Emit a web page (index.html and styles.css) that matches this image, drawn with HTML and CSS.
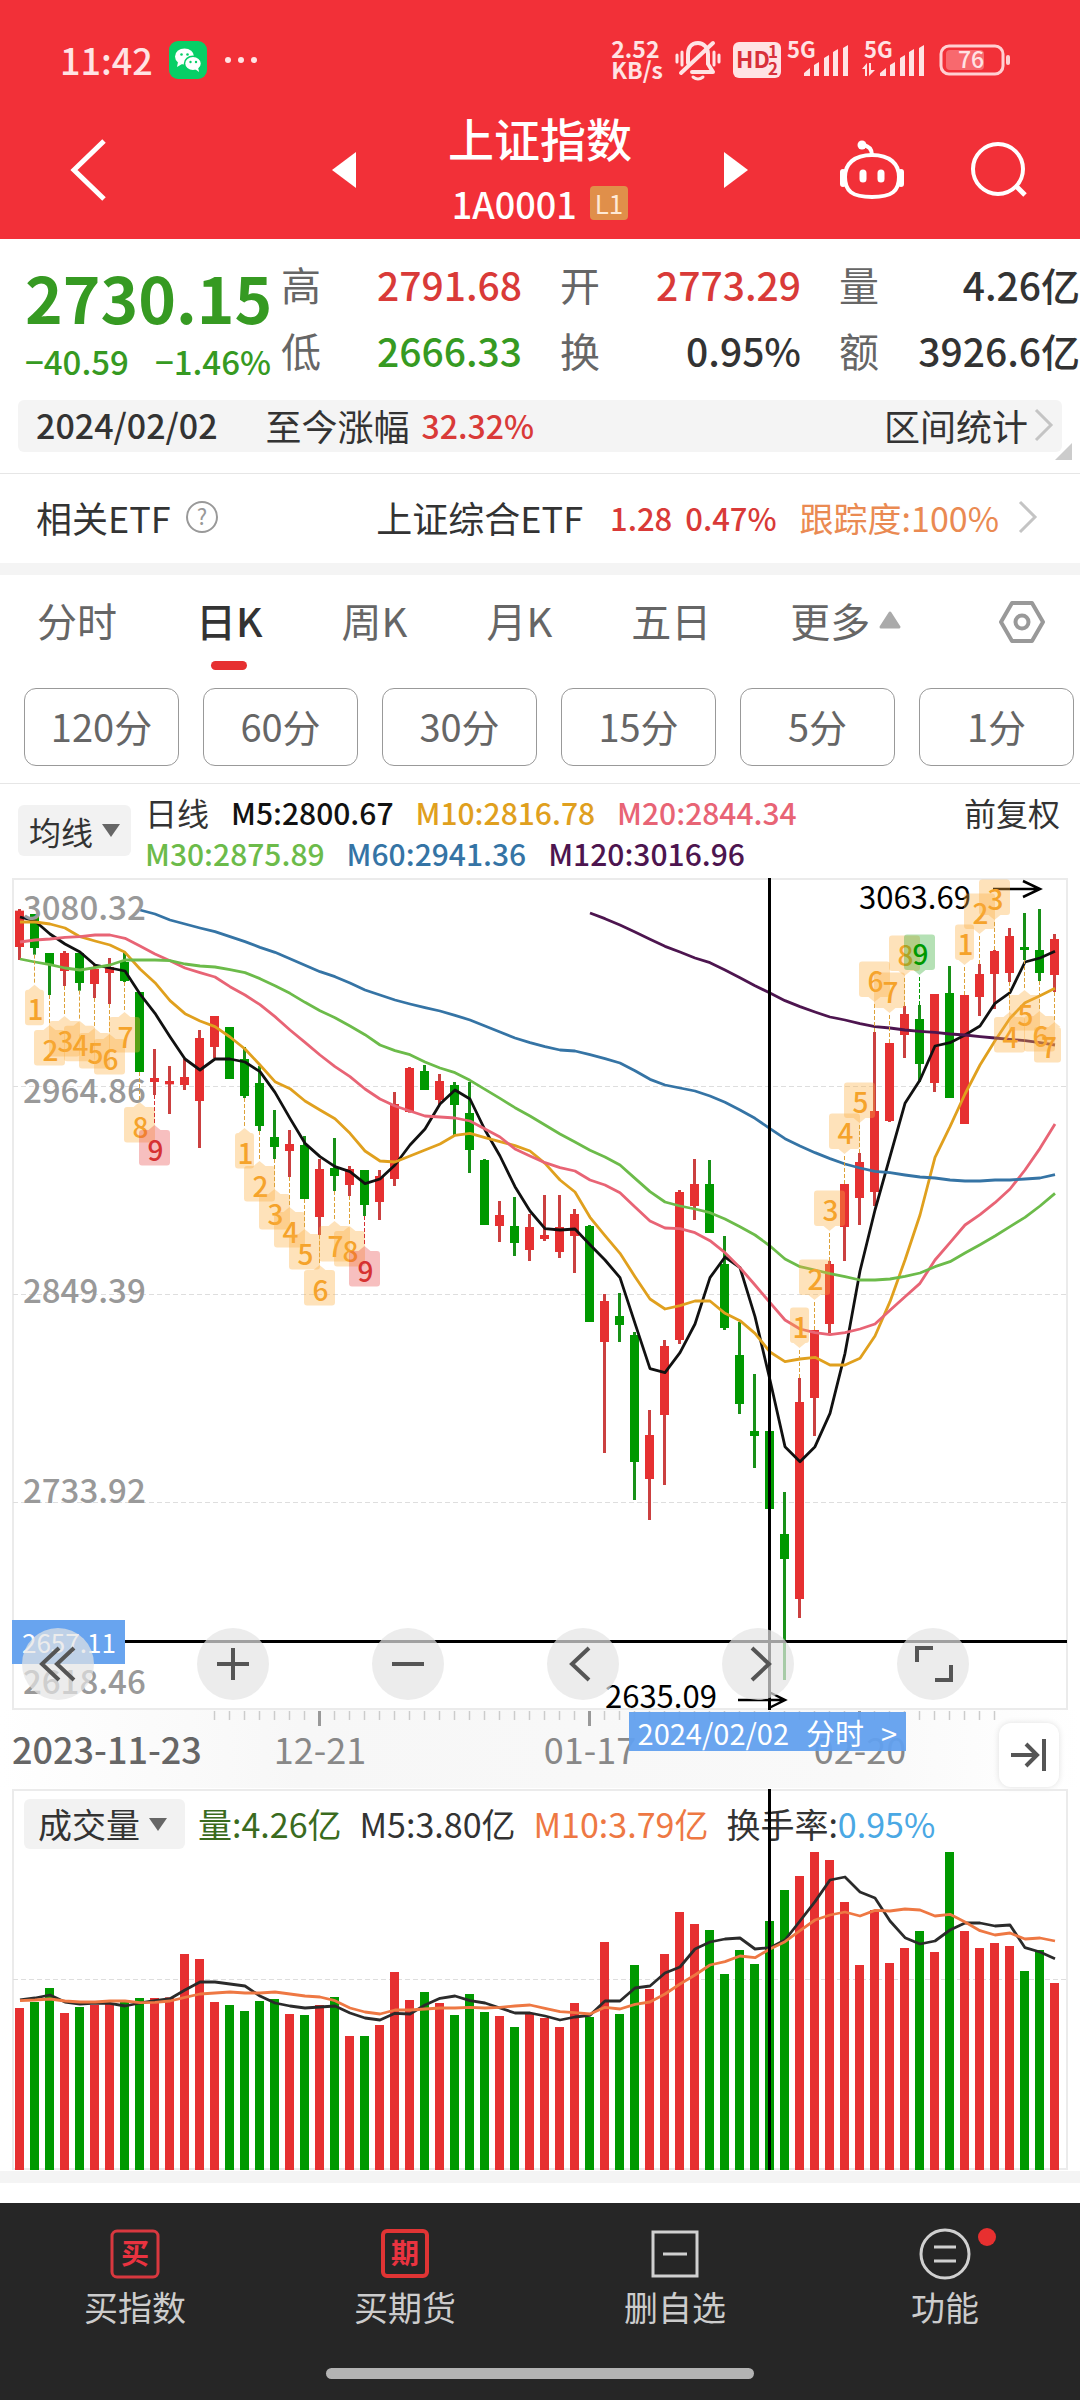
FILE: index.html
```html
<!DOCTYPE html>
<html lang="zh-CN">
<head>
<meta charset="utf-8">
<meta name="viewport" content="width=device-width, initial-scale=1">
<title>上证指数 1A0001</title>
<link rel="stylesheet" href="styles.css">
</head>
<body>
<header class="top">
  <div class="status">
    <span class="clock">11:42</span>
    <svg class="wechat" viewBox="0 0 38 38" width="38" height="38"><rect width="38" height="38" rx="9" fill="#07cf66"/><ellipse cx="15.500" cy="15.500" rx="9.500" ry="8" fill="#fff"/><path d="M9 21l-1 5 5-3z" fill="#fff"/><ellipse cx="24" cy="22.500" rx="8.500" ry="7.200" fill="#fff" stroke="#07cf66" stroke-width="1.500"/><path d="M26 28l4 3-1-5z" fill="#fff"/><g fill="#07cf66"><circle cx="12.500" cy="13.500" r="1.300"/><circle cx="18.500" cy="13.500" r="1.300"/><circle cx="21.500" cy="21" r="1.200"/><circle cx="27" cy="21" r="1.200"/></g></svg>
    <svg viewBox="0 0 34 8" width="34" height="8" fill="#ffe3e4"><circle cx="4" cy="4" r="3"/><circle cx="17" cy="4" r="3"/><circle cx="30" cy="4" r="3"/></svg>
    <div class="status-right">
      <span class="speed">2.52<br>KB/s</span>
      <svg viewBox="0 0 46 40" width="46" height="40" fill="none" stroke="#ffe3e4" stroke-width="3" stroke-linecap="round"><path d="M17 32h21l-5-8V14c0-6-4-11-10-11-7 0-10 5-10 11v9M38 3L6 33" stroke-linejoin="round" stroke-width="4"/><path d="M18 37q5 4 10 0M2 15v7M7 12v13M44 15v7M39 12v13"/></svg>
      <svg class="hd-badge" viewBox="0 0 48 36" width="48" height="36"><rect width="48" height="36" rx="6" fill="#ffe3e4"/><text class="hd" x="3" y="26">HD</text><text class="hd-num" x="35" y="16">1</text><text class="hd-num" x="35" y="33">2</text></svg>
      <svg viewBox="0 0 64 38" width="64" height="38" fill="#ffe3e4"><text class="net" x="0" y="17">5G</text><path d="M17 35v-3l6-5v8zM27 24l5-3v14h-5zM37 17l5-3v21h-5zM46 11l5-3v27h-5zM56 7l5-3v31h-5z"/></svg>
      <svg viewBox="0 0 64 38" width="64" height="38" fill="#ffe3e4"><text class="net" x="1" y="17">5G</text><path d="M-1 28l5-6v13H2v-7zM6 22h2v7h4l-6 6zM17 35v-3l6-5v8zM27 24l5-3v14h-5zM37 17l5-3v21h-5zM46 11l5-3v27h-5zM56 7l5-3v31h-5z"/></svg>
      <svg viewBox="0 0 72 32" width="72" height="32"><rect x="2" y="2" width="62" height="28" rx="8" fill="none" stroke="#ffd0d2" stroke-width="3"/><rect x="7" y="6" width="38" height="20" rx="4" fill="#f8696e"/><rect x="67" y="11" width="4" height="10" rx="2" fill="#ffd0d2"/><text class="charge" x="32" y="24">76</text></svg>
    </div>
  </div>
  <nav class="nav">
    <button class="plain back" aria-label="返回"><svg viewBox="0 0 40 64" width="40" height="64" fill="none" stroke="#fff" stroke-width="5"><path d="M36 3L6 32l30 29"/></svg></button>
    <div class="switcher">
      <button class="plain" aria-label="上一个"><svg viewBox="0 0 24 38" width="24" height="38" fill="#fff"><path d="M24 1v36L0 19z"/></svg></button>
      <div class="title">
        <h1>上证指数</h1>
        <p>1A0001<span class="level">L1</span></p>
      </div>
      <button class="plain" aria-label="下一个"><svg viewBox="0 0 24 38" width="24" height="38" fill="#fff"><path d="M0 1v36l24-18z"/></svg></button>
    </div>
    <div class="nav-right">
      <button class="plain" aria-label="智能助手"><svg viewBox="0 0 66 60" width="66" height="60" fill="none" stroke="#fff" stroke-width="4"><path d="M33 15c18 0 27 9 27 22 0 14-7 20-27 20S6 51 6 37c0-13 9-22 27-22z"/><path d="M33 15c0-6-3-9-9-10"/><path d="M4 32v12M62 32v12" stroke-width="6" stroke-linecap="round"/><circle cx="23" cy="5" r="4.500" fill="#fff" stroke="none"/><path d="M24 33v6M42 33v6" stroke-width="7" stroke-linecap="round"/></svg></button>
      <button class="plain" aria-label="搜索"><svg viewBox="0 0 60 60" width="60" height="60" fill="none" stroke="#fff" stroke-width="4"><circle cx="29" cy="29" r="25"/><path d="M47 46l9 9" stroke-width="5"/></svg></button>
    </div>
  </nav>
</header>

<main>
  <section class="quote">
    <div class="last">
      <div class="price">2730.15</div>
      <div class="change"><span>−40.59</span><span>−1.46%</span></div>
    </div>
    <dl class="stats">
      <div><dt>高</dt><dd class="up">2791.68</dd></div>
      <div><dt>开</dt><dd class="up">2773.29</dd></div>
      <div><dt>量</dt><dd>4.26亿</dd></div>
      <div><dt>低</dt><dd class="down">2666.33</dd></div>
      <div><dt>换</dt><dd>0.95%</dd></div>
      <div><dt>额</dt><dd>3926.6亿</dd></div>
    </dl>
  </section>

  <section class="range">
    <span class="day">2024/02/02</span>
    <span>至今涨幅</span>
    <span class="up gain">32.32%</span>
    <a href="#stats" class="range-link">区间统计<svg viewBox="0 0 20 34" width="20" height="34" fill="none" stroke="#c4c4c4" stroke-width="3"><path d="M2 2l15 15L2 32"/></svg></a>
    <svg class="fold" viewBox="0 0 17 17" width="17" height="17"><path d="M17 0v17H0z" fill="#ccc"/></svg>
  </section>

  <a href="#etf" class="etf">
    <span>相关ETF</span>
    <svg class="help" viewBox="0 0 34 34" width="34" height="34"><circle cx="17" cy="17" r="15" fill="none" stroke="#999" stroke-width="2"/><text x="17" y="25">?</text></svg>
    <span class="etf-name">上证综合ETF</span>
    <span class="up etf-num">1.28</span>
    <span class="up etf-num">0.47%</span>
    <span class="track">跟踪度:100%</span>
    <svg viewBox="0 0 20 34" width="20" height="34" fill="none" stroke="#c4c4c4" stroke-width="3"><path d="M2 2l15 15L2 32"/></svg>
  </a>
  <div class="band"></div>

  <div class="tabs">
    <button class="plain tab">分时</button>
    <button class="plain tab current">日K</button>
    <button class="plain tab">周K</button>
    <button class="plain tab">月K</button>
    <button class="plain tab">五日</button>
    <button class="plain tab more">更多<svg viewBox="0 0 22 18" width="22" height="18"><path d="M11 2l9 14H2z" fill="#aaa" stroke="#aaa" stroke-width="3" stroke-linejoin="round"/></svg></button>
    <button class="plain setting" aria-label="设置"><svg viewBox="0 0 48 44" width="48" height="44" fill="none" stroke="#999" stroke-width="4"><path d="M14 3h20l11 19-11 19H14L3 22z" stroke-linejoin="round"/><circle cx="24" cy="22" r="6.500"/></svg></button>
  </div>
  <div class="periods">
    <button>120分</button><button>60分</button><button>30分</button><button>15分</button><button>5分</button><button>1分</button>
  </div>

  <section class="averages">
    <button class="picker">均线<svg viewBox="0 0 18 13" width="18" height="13"><path d="M0 0h18l-9 13z" fill="#666"/></svg></button>
    <div class="avg-list">
      <div><span class="ink day-line">日线</span><span class="m5">M5:2800.67</span><span class="m10">M10:2816.78</span><span class="m20">M20:2844.34</span></div>
      <div><span class="m30">M30:2875.89</span><span class="m60">M60:2941.36</span><span class="m120">M120:3016.96</span></div>
    </div>
    <button class="plain adjust">前复权</button>
  </section>

  <section class="kline">
    <svg id="kline" viewBox="0 8 1080 832" role="img" aria-label="日K线图"></svg>
    <div class="tools">
      <button aria-label="收起"><svg viewBox="0 0 72 72"><path d="M37 20L20 36l17 16M52 20L35 36l17 16"/></svg></button>
      <button aria-label="放大"><svg viewBox="0 0 72 72"><path d="M36 20v32M20 36h32"/></svg></button>
      <button aria-label="缩小"><svg viewBox="0 0 72 72"><path d="M20 36h32"/></svg></button>
      <button aria-label="左移"><svg viewBox="0 0 72 72"><path d="M42 20L25 36l17 16"/></svg></button>
      <button aria-label="右移"><svg viewBox="0 0 72 72"><path d="M30 20l17 16-17 16"/></svg></button>
      <button aria-label="全屏"><svg viewBox="0 0 72 72"><path d="M20 34V20h16M38 52h16V37"/></svg></button>
    </div>
  </section>

  <section class="axis">
    <svg id="axis" viewBox="0 0 1080 78" role="img" aria-label="日期轴"></svg>
    <button class="cursor-date">2024/02/02<span>分时</span><span>&gt;</span></button>
    <button class="latest" aria-label="最新"><svg viewBox="0 0 40 36" width="40" height="36" fill="none" stroke="#555" stroke-width="4"><path d="M2 18h25M17 7l11 11-11 11M35 2v32"/></svg></button>
  </section>

  <section class="volume">
    <div class="vol-head">
      <button class="picker">成交量<svg viewBox="0 0 18 13" width="18" height="13"><path d="M0 0h18l-9 13z" fill="#666"/></svg></button>
      <span class="vol">量:4.26亿</span>
      <span class="ink">M5:3.80亿</span>
      <span class="vol10">M10:3.79亿</span>
      <span class="ink">换手率:<span class="turn">0.95%</span></span>
    </div>
    <svg id="volume" viewBox="0 8 1080 383" role="img" aria-label="成交量图"></svg>
  </section>
  <div class="band"></div>
</main>

<footer class="bottom">
  <div class="actions">
    <button class="plain"><svg viewBox="0 0 52 52" width="52" height="52"><rect x="3" y="3" width="46" height="46" rx="5" fill="none" stroke="#d8383f" stroke-width="3"/><text class="seal" x="26" y="36">买</text></svg>买指数</button>
    <button class="plain"><svg viewBox="0 0 52 52" width="52" height="52"><rect x="4" y="3" width="44" height="45" rx="4" fill="none" stroke="#e03434" stroke-width="4"/><text class="seal" x="26" y="36">期</text></svg>买期货</button>
    <button class="plain"><svg viewBox="0 0 52 52" width="52" height="52" fill="none" stroke="#d0d0d0" stroke-width="3"><path d="M4 4h44v44H4z"/><path d="M14 26h24"/></svg>删自选</button>
    <button class="plain"><svg viewBox="0 0 52 52" width="52" height="52" fill="none" stroke="#d0d0d0" stroke-width="3"><circle cx="26" cy="26" r="24"/><path d="M15 19h22M15 33h22"/></svg>功能<i class="dot"></i></button>
  </div>
  <div class="home"></div>
</footer>
<script src="chart.js"></script>
</body>
</html>
```
FILE: styles.css
```css
* { box-sizing: border-box; }
body {
  margin: 0;
  background: #fff;
  color: #333;
  font-family: "Noto Sans CJK SC", "Noto Sans", sans-serif;
  font-size: 36px;
  overflow-x: hidden;
}
button { font: inherit; color: inherit; cursor: pointer; padding: 0; }
.plain { border: 0; background: none; }
a { color: inherit; text-decoration: none; }
svg { display: block; flex: none; }
h1, p, dl, dd { margin: 0; }
.up { color: #d93a38; }
.down { color: #369a22; }
.ink { color: #333; }

/* header */
.top { background: #f23038; color: #fff; height: 239px; }
.status { display: flex; align-items: center; height: 100px; padding: 20px 69px 0 60px; color: #ffe3e4; }
.status svg { overflow: visible; }
.clock { font-size: 36px; line-height: 40px; padding-bottom: 3px; font-weight: 500; }
.wechat { margin: 0 17px 0 16px; }
.status-right { margin-left: auto; display: flex; align-items: center; gap: 12px; }
.speed { font-size: 23px; line-height: 21px; padding-bottom: 2px; font-weight: 700; }
.hd-badge { margin-right: -6px; }
.hd { font-size: 23px; font-weight: 700; fill: #d8303a; }
.hd-num { font-size: 17px; font-weight: 700; fill: #d8303a; }
.net { font-size: 22px; font-weight: 700; }
.charge { font-size: 23px; font-weight: 500; fill: #ffe3e4; text-anchor: middle; }
.nav { display: grid; grid-template-columns: 1fr 416px 1fr; align-items: center; height: 139px; }
.back { justify-self: start; margin-left: 68px; }
.switcher { display: flex; align-items: center; justify-content: space-between; }
.title { text-align: center; }
.title h1 { font-size: 46px; line-height: 66px; font-weight: 500; }
.title p { display: flex; align-items: center; justify-content: center; gap: 13px; font-size: 36px; line-height: 66px; font-weight: 500; }
.level { background: #e08f4a; border-radius: 4px; font-size: 26px; line-height: 34px; padding: 0 5px; color: #ffe9d5; font-weight: 400; }
.nav-right { display: flex; align-items: center; justify-content: flex-end; gap: 64px; padding-right: 51px; }

/* quote */
.quote { display: flex; height: 161px; }
.last { width: 281px; padding: 24px 0 0 25px; color: #369a22; font-weight: 500; }
.price { font-size: 64px; line-height: 66px; font-weight: 700; }
.change { display: flex; gap: 26px; font-size: 33px; line-height: 64px; }
.stats { flex: 1; display: grid; grid-template-columns: repeat(3, 1fr); column-gap: 38px; padding-top: 12px; grid-auto-rows: 66px; font-size: 40px; line-height: 66px; }
.stats div { display: flex; justify-content: space-between; }
.stats dt { color: #666; }
.stats dd { font-size: 39px; font-weight: 500; white-space: nowrap; }

.range { position: relative; display: flex; align-items: center; height: 52px; margin: 0 18px 21px; padding: 0 8px 3px 18px; background: #f4f4f4; border-radius: 6px; line-height: 48px; }
.day { font-size: 34px; font-weight: 500; margin-right: 48px; }
.gain { font-size: 32px; margin-left: 12px; font-weight: 500; }
.range-link { margin-left: auto; display: flex; align-items: center; gap: 6px; }
.fold { position: absolute; right: -10px; bottom: -8px; }

.etf { display: flex; align-items: center; height: 90px; padding: 0 42px 3px 36px; border-top: 1px solid #e6e6e6; }
.help { margin-left: 14px; }
.help text { font-size: 22px; fill: #999; text-anchor: middle; }
.etf-name { margin-left: auto; margin-right: 27px; }
.etf-num { font-size: 31px; margin-right: 13px; font-weight: 500; }
.track { font-size: 34px; color: #ea8a52; margin: 0 19px 0 10px; }
.band { height: 12px; background: #f4f4f4; }

/* period tabs */
.tabs { display: flex; align-items: flex-start; height: 113px; padding: 15px 34px 0 37px; gap: 79px; font-size: 40px; line-height: 60px; color: #666; }
.tab { position: relative; }
.current { color: #333; font-weight: 500; }
.current::after { content: ""; position: absolute; left: 50%; bottom: -20px; width: 36px; height: 9px; margin-left: -18px; border-radius: 5px; background: #e63031; }
.more { display: flex; align-items: center; gap: 9px; }
.setting { margin: 10px 0 0 auto; }
.periods { display: grid; grid-template-columns: repeat(6, 1fr); gap: 24px; padding: 0 6px 17px 24px; border-bottom: 1px solid #e6e6e6; }
.periods button { height: 78px; padding-bottom: 3px; border: 1px solid #999; border-radius: 12px; background: #fff; color: #666; font-size: 38px; }

/* moving averages */
.averages { display: flex; align-items: flex-start; height: 94px; padding: 8px 20px 0 18px; font-size: 30px; }
.picker { display: flex; align-items: center; justify-content: center; gap: 9px; height: 51px; border: 0; border-radius: 6px; background: #f2f2f2; }
.averages .picker { width: 113px; margin-top: 13px; font-size: 32px; }
.avg-list { margin-left: 14px; line-height: 41px; font-weight: 500; }
.avg-list div { display: flex; gap: 22px; }
.day-line { font-size: 32px; font-weight: 400; }
.m5 { color: #111; }
.m10 { color: #e0a01e; }
.m20 { color: #e86475; }
.m30 { color: #6cbb4a; }
.m60 { color: #3574a5; }
.m120 { color: #4d154f; }
.adjust { margin-left: auto; font-size: 32px; line-height: 41px; }

/* charts */
.kline { position: relative; }
.kline > svg, .axis > svg, .volume > svg { width: 100%; height: auto; }
.tools { position: absolute; left: 22px; right: 111px; bottom: 10px; display: flex; justify-content: space-between; }
.tools button { width: 72px; height: 72px; border: 0; border-radius: 50%; background: rgba(228, 228, 228, .7); }
.tools svg { width: 72px; height: 72px; fill: none; stroke: #555; stroke-width: 4; }
.axis { position: relative; background: linear-gradient(to right, #fff 0, #f7f7f7 28%, #f9f9f9 80%, #fff 100%); }
.cursor-date { position: absolute; left: 58.2%; top: 2px; height: 39px; padding: 0 9px 0 9px; display: flex; align-items: center; gap: 17px; border: 0; background: rgba(98, 160, 238, .95); color: #fff; font-size: 29px; white-space: nowrap; }
.latest { position: absolute; right: 21px; top: 13px; width: 60px; height: 64px; display: flex; align-items: center; justify-content: center; border: 0; border-radius: 12px; background: #fff; box-shadow: 0 0 6px rgba(0, 0, 0, .12); }
.volume { display: grid; }
.vol-head, .volume > svg { grid-area: 1 / 1; }
.volume > svg { z-index: 1; pointer-events: none; }
.vol-head { display: flex; align-items: center; align-self: start; gap: 18px; padding: 11px 24px; font-size: 34px; line-height: 50px; white-space: nowrap; }
.vol-head .picker { width: 161px; height: 50px; margin-right: -5px; padding-right: 4px; }
.vol { color: #3a6b1e; }
.vol10 { color: #ee7843; }
.turn { color: #4aa8e4; }

.scale { font-size: 33px; font-weight: 500; fill: #999; }
.peak { font-size: 31px; fill: #000; }
.cursor-price { font-size: 26px; fill: #fff; }
.tag { font-size: 28px; font-weight: 500; text-anchor: middle; }
.date { font-size: 36px; fill: #888; text-anchor: middle; }
.date-start { font-size: 36px; font-weight: 500; fill: #666; }

/* bottom bar */
.bottom { margin-top: 20px; height: 197px; background: #262626; color: #ccc; }
.actions { display: grid; grid-template-columns: repeat(4, 1fr); padding-top: 25px; height: 165px; }
.actions button { position: relative; display: flex; flex-direction: column; align-items: center; justify-content: flex-start; gap: 2px; font-size: 34px; line-height: 50px; }
.seal { font-size: 28px; font-weight: 700; fill: #ea3340; text-anchor: middle; }
.dot { position: absolute; left: calc(50% + 33px); top: 0; width: 18px; height: 18px; border-radius: 50%; background: #e83030; }
.home { width: 428px; height: 11px; margin: 0 auto; border-radius: 6px; background: #b3b3b3; }
```
FILE: chart.js
```js
const NS = 'http://www.w3.org/2000/svg';
const UP = '#e63031', DOWN = '#009900';
// Levels are stored in thirds of a chart unit.
const lv = v => v / 3;
const cx = i => 19.5 + 15 * i;

function add(parent, name, attrs, text) {
  const el = document.createElementNS(NS, name);
  for (const k in attrs) el.setAttribute(k, attrs[k]);
  if (text !== undefined) el.textContent = text;
  parent.appendChild(el);
  return el;
}
const line = (p, x1, y1, x2, y2, stroke, w, dash) =>
  add(p, 'path', { d: `M${x1} ${y1}L${x2} ${y2}`, stroke, 'stroke-width': w, fill: 'none', 'stroke-dasharray': dash || 'none' });
const curve = (p, data, start, stroke) =>
  add(p, 'polyline', { points: data.map((v, k) => `${cx(start + k) + 0.5},${lv(v)}`).join(' '), fill: 'none', stroke, 'stroke-width': 2.8, 'stroke-linejoin': 'round' });

// direction, high, body top, body bottom, low
const candles = `R 117 122 231 270|G 132 132 234 254|G 249 249 285 375|R 243 249 303 348|G 249 249 339 362|R 285 297 342 384|R 264 291 309 402|G 249 276 333 336|G 366 366 606 606|R 537 624 636 675|R 588 633 643 732|R 567 621 645 660|R 480 504 693 834|R 438 438 531 564|G 471 471 627 627|G 531 567 678 684|G 588 639 768 783|G 720 801 831 867|R 780 822 843 921|G 798 825 987 987|R 867 897 1041 1095|G 804 894 918 963|R 888 897 945 978|G 900 900 1005 1038|R 900 918 996 1050|R 666 702 927 948|R 591 594 726 728|G 585 603 660 660|R 612 633 690 705|G 636 645 705 798|G 636 729 840 909|G 867 870 1065 1065|R 993 1035 1068 1116|G 981 1068 1119 1158|R 1032 1071 1140 1173|R 975 1095 1107 1113|R 975 1071 1146 1164|R 1017 1032 1098 1209|G 1065 1068 1356 1356|R 1272 1293 1416 1749|G 1269 1338 1365 1416|G 1386 1395 1776 1890|R 1620 1695 1827 1950|R 1410 1428 1635 1845|R 960 966 1410 1422|R 867 942 1008 1050|G 870 942 1089 1089|G 1098 1182 1374 1380|G 1356 1455 1602 1632|G 1512 1683 1698 1794|G 1683 1683 1917 1917|G 1866 1992 2067 2430|R 1524 1596 2187 2244|R 1380 1380 1584 1698|R 1173 1182 1362 1389|R 942 942 1071 1173|R 849 876 984 1065|R 486 723 966 1008|R 519 519 753 756|R 408 432 495 564|G 405 447 582 636|R 372 372 639 666|G 288 369 684 684|R 375 375 762 762|R 282 312 381 438|R 240 243 312 417|R 174 198 309 336|G 129 231 240 270|G 117 240 309 333|R 192 207 315 366`
  .split('|').map(s => s.split(' ')).map(([d, ...n]) => [d, ...n.map(Number)]);

const m5 = [141,153,192,222,246,285,294,303,372,430,500,567,600,567,567,576,605,667,745,820,860,890,905,941,927,885,825,777,702,660,687,780,858,950,1023,1076,1080,1077,1124,1170,1223,1360,1496,1508,1448,1362,1223,1161,1193,1340,1530,1730,1775,1730,1630,1450,1203,1020,860,700,630,528,518,495,468,400,368,276,264,244];
const m10 = [156,156,162,174,200,213,225,247,297,338,392,431,453,470,501,537,585,635,656,693,720,746,790,843,873,876,858,840,822,796,790,803,815,827,843,880,930,966,1042,1097,1150,1220,1287,1317,1307,1293,1293,1330,1352,1390,1446,1475,1467,1462,1485,1485,1465,1398,1295,1170,1035,862,770,672,585,512,445,398,377,355];
const m20 = [216,210,207,202,200,195,195,205,228,252,272,294,308,321,350,375,404,440,480,517,555,590,620,657,687,708,723,738,741,744,753,777,801,837,858,878,893,903,930,945,968,1011,1053,1074,1076,1088,1112,1148,1193,1245,1298,1350,1377,1388,1394,1388,1377,1362,1321,1280,1240,1170,1118,1065,1034,998,957,900,835,762];
const m30 = [267,276,284,294,300,293,285,270,270,270,272,282,288,291,299,308,326,347,370,397,422,443,468,494,525,542,554,576,594,608,631,658,685,713,738,765,792,816,841,861,885,925,965,996,1008,1017,1028,1047,1070,1095,1128,1167,1190,1200,1211,1220,1230,1230,1227,1219,1209,1190,1175,1149,1124,1098,1070,1042,1008,970];
const m60 = [120,132,150,162,174,185,200,215,232,247,266,286,305,320,339,360,375,390,402,413,423,436,450,468,486,504,518,530,540,543,554,566,579,602,628,645,654,663,678,697,720,745,776,806,828,848,866,882,894,904,908,915,921,924,930,933,933,930,930,927,924,914];
const m120 = [129,146,165,186,208,229,246,264,278,300,323,347,369,392,410,426,441,450,461,470,474,480,484,487,492,495,500,504,508,512,518,525];

// Sequence counts: first candle of the run, first digit, length, side
const runs = [[1, 1, 9, 'below'], [15, 1, 9, 'below'], [52, 1, 9, 'above'], [63, 1, 3, 'above'], [66, 4, 4, 'below']];

function drawTag(svg, i, digit, side) {
  const below = side === 'below', s = below ? 1 : -1;
  const [, high, , , low] = candles[i];
  const from = lv(below ? low : high), tip = from + s * 30, x = cx(i);
  const nine = digit === 9;
  const ink = !nine ? '#f5a32b' : below ? '#d63232' : '#009900';
  const fill = !nine ? 'rgba(251,176,64,.36)' : below ? 'rgba(232,60,60,.33)' : 'rgba(30,165,30,.33)';
  line(svg, x, from, x, tip, nine ? ink : '#dda23a', 1, '4 2');
  const half = digit === 1 ? 9.5 : 15.5;
  const l = x - half, r = Math.min(x + half, 1061), mid = (l + r) / 2, c = r < x + half ? mid - 2 : x;
  const left = r < x + half ? l - 5 : l;
  const near = tip + s * 5, far = tip + s * 40.5;
  add(svg, 'path', {
    d: `M${x} ${tip}L${x + 6} ${near}H${r - 3}Q${r} ${near} ${r} ${near + s * 3}V${far - s * 3}Q${r} ${far} ${r - 3} ${far}H${left + 3}Q${left} ${far} ${left} ${far - s * 3}V${near + s * 3}Q${left} ${near} ${left + 3} ${near}H${x - 6}Z`,
    fill
  });
  add(svg, 'text', { class: 'tag', x: c + 1, y: (near + far) / 2 + 13, fill: ink }, digit);
}

function drawKline() {
  const svg = document.getElementById('kline');
  add(svg, 'rect', { x: 13, y: 9, width: 1054, height: 830, fill: 'none', stroke: '#ebebeb', 'stroke-width': 2 });
  [216.5, 424.5, 632.5].forEach(y => line(svg, 13, y, 1067, y, '#dedede', 1, '5 3'));
  candles.forEach(([d, high, top, bottom, low], i) => {
    const fill = d === 'R' ? UP : DOWN;
    add(svg, 'rect', { x: cx(i) - 1.5, y: lv(high), width: 3, height: lv(low - high), fill: d === 'R' ? '#cb4040' : '#189018' });
    add(svg, 'rect', { x: cx(i) - 4.5, y: lv(top), width: 9, height: lv(bottom - top), fill });
  });
  curve(svg, m5, 0, '#111');
  curve(svg, m10, 0, '#e0a01e');
  curve(svg, m20, 0, '#e86475');
  curve(svg, m30, 0, '#6cbb4a');
  curve(svg, m60, 8, '#3574a5');
  curve(svg, m120, 38, '#4d154f');
  [['3080.32', 50], ['2964.86', 233], ['2849.39', 433], ['2733.92', 633], ['2618.46', 824]]
    .forEach(([t, y]) => add(svg, 'text', { class: 'scale', x: 23, y }, t));
  add(svg, 'text', { class: 'peak', x: 859, y: 39 }, '3063.69');
  add(svg, 'path', { d: 'M993 19h47M1023 11l17 8-17 8', fill: 'none', stroke: '#000', 'stroke-width': 2.5 });
  add(svg, 'text', { class: 'peak', x: 605, y: 838 }, '2635.09');
  add(svg, 'path', { d: 'M738 830h47M769 822l16 8-16 8', fill: 'none', stroke: '#000', 'stroke-width': 2.5 });
  runs.forEach(([start, digit, count, side]) => {
    for (let k = 0; k < count; k++) drawTag(svg, start + k, digit + k, side);
  });
  line(svg, 13, 771.5, 1067, 771.5, '#000', 3);
  line(svg, 769.5, 8, 769.5, 840, '#000', 3);
  add(svg, 'rect', { x: 12, y: 750, width: 113, height: 44, fill: '#68a4ef' });
  add(svg, 'text', { class: 'cursor-price', x: 22, y: 783 }, '2657.11');
}

function drawAxis() {
  const svg = document.getElementById('axis');
  for (let i = 13; i <= 65; i++) {
    const major = i === 20 || i === 38 || i === 56;
    line(svg, cx(i), 1, cx(i), major ? 16 : 10, major ? '#999' : '#ccc', major ? 3 : 1.5);
  }
  add(svg, 'text', { class: 'date-start', x: 12, y: 54 }, '2023-11-23');
  [['12-21', 320], ['01-17', 590], ['02-20', 860]].forEach(([t, x]) => add(svg, 'text', { class: 'date', x, y: 54 }, t));
}

const volumes = [684,666,624,699,681,675,670,666,654,654,652,522,537,666,675,693,663,657,702,705,675,651,768,768,735,576,660,636,669,705,642,696,708,741,702,714,741,669,711,486,702,555,627,522,396,432,450,582,510,552,423,330,288,216,240,366,555,390,549,504,453,516,216,453,504,489,498,573,510,609];
const v5 = [660,654,645,666,672,669,670,678,669,662,656,630,606,606,612,618,648,669,678,684,681,678,699,714,720,700,702,675,655,648,662,669,684,699,699,708,720,711,706,663,663,624,618,579,561,507,486,477,474,507,503,480,423,365,300,291,336,354,423,473,492,483,450,429,429,438,435,503,516,536];
const v10 = [662,660,657,663,666,666,663,663,668,667,663,652,642,639,636,639,639,636,642,648,651,662,684,696,702,690,690,687,684,684,682,684,682,678,675,685,695,698,702,682,687,673,666,642,612,585,555,545,528,533,507,485,452,420,405,396,408,391,393,387,390,408,403,426,452,465,459,477,474,483];

function drawVolume() {
  const svg = document.getElementById('volume');
  add(svg, 'rect', { x: 13, y: 10, width: 1054, height: 379, fill: 'none', stroke: '#ebebeb', 'stroke-width': 2 });
  line(svg, 13, 199.5, 1067, 199.5, '#dedede', 1, '5 3');
  volumes.forEach((v, i) => add(svg, 'rect', { x: cx(i) - 4.5, y: lv(v), width: 9, height: 390 - lv(v), fill: candles[i][0] === 'R' ? UP : DOWN }));
  curve(svg, v5, 0, '#2b2b2b');
  curve(svg, v10, 0, '#ee7843');
  line(svg, 769.5, 9, 769.5, 390, '#000', 3);
}

drawKline();
drawAxis();
drawVolume();
```
